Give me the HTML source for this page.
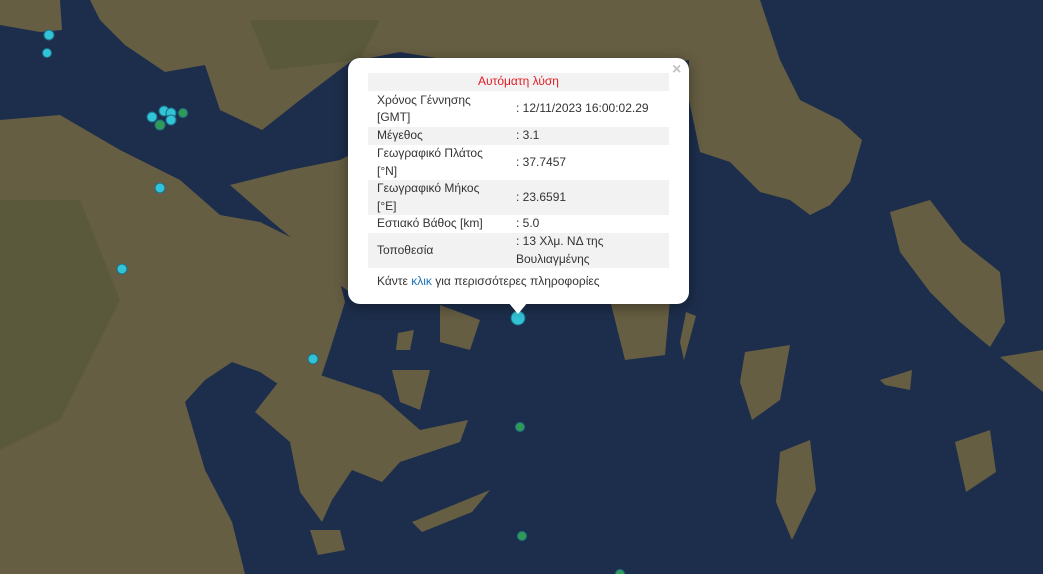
<!DOCTYPE html>
<html><head><meta charset="utf-8">
<style>
html,body{margin:0;padding:0;width:1043px;height:574px;overflow:hidden;background:#1d2e4c;font-family:"Liberation Sans",Arial,sans-serif}
svg{position:absolute;left:0;top:0}
.pop{position:absolute;left:348px;top:58px;width:341px;height:246px;background:#fff;border-radius:12px;box-shadow:0 3px 14px rgba(0,0,0,.4)}
.tip{position:absolute;left:508px;top:302px;width:0;height:0;border-left:10px solid transparent;border-right:10px solid transparent;border-top:12px solid #fff}
.x{position:absolute;left:672px;top:61px;color:#c3c3c3;font-size:16px;font-weight:bold}
table{position:absolute;left:368px;top:73px;width:301px;border-collapse:collapse;font-size:12px;color:#333}
td{padding:0 0 0 9px;line-height:17.5px;vertical-align:middle}
tr.g{background:#f2f2f2}
td.v{padding-left:4px}
.ft{position:absolute;left:377px;top:274px;font-size:12px;color:#333}
.ft span{color:#1a73b8}
</style></head><body>
<svg width="1043" height="574" viewBox="0 0 1043 574">
<rect width="1043" height="574" fill="#1d2e4c"/>
<g fill="#665e42">
<polygon points="0,0 60,0 62,30 40,32 0,25"/>
<polygon points="90,0 720,0 722,40 690,60 600,72 520,70 460,62 400,52 350,62 300,100 262,130 220,110 205,65 165,72 125,45 100,20"/>
<polygon points="230,185 290,170 340,160 360,150 360,300 340,285 300,245 270,220"/>
<polygon points="0,120 60,115 120,150 180,180 220,215 260,222 300,242 340,282 345,302 330,350 320,380 290,392 260,372 232,362 205,380 185,402 205,470 232,522 245,574 0,574"/>
<polygon points="280,380 320,375 380,395 420,430 468,420 460,442 430,452 400,462 382,482 352,470 332,500 322,522 300,492 290,442 255,412"/>
<polygon points="689,0 760,0 780,60 800,100 840,120 862,140 850,182 830,205 810,215 790,200 760,192 730,162 700,152 689,100"/>
<polygon points="440,305 480,320 470,350 440,342"/>
<polygon points="610,300 670,300 665,355 625,360"/>
<polygon points="890,212 930,200 962,242 1000,272 1005,322 990,347 960,322 930,292 900,252"/>
<polygon points="745,352 790,345 780,400 752,420 740,382"/>
<polygon points="1000,357 1043,350 1043,392"/>
<polygon points="955,442 990,430 996,472 966,492"/>
<polygon points="780,452 810,440 816,490 792,540 776,502"/>
<polygon points="412,522 490,490 472,512 422,532"/>
<polygon points="392,370 430,370 420,410 400,402"/>
<polygon points="686,312 696,316 684,360 680,342"/>
<polygon points="398,333 414,330 410,350 396,350"/>
<polygon points="880,380 912,370 910,390 885,385"/>
<polygon points="310,530 340,530 345,550 318,555"/>
</g>
<g fill="#4d5434" opacity=".5">
<polygon points="0,200 80,200 120,300 60,420 0,450"/>
<polygon points="250,20 380,20 360,60 270,70"/>
</g>
<g stroke="#1b6f88" stroke-width="1">
<circle cx="49" cy="35" r="5" fill="#32c3d6"/>
<circle cx="47" cy="53" r="4.5" fill="#32c3d6"/>
<circle cx="160" cy="188" r="5" fill="#32c3d6"/>
<circle cx="122" cy="269" r="5" fill="#32c3d6"/>
<circle cx="313" cy="359" r="5" fill="#32c3d6"/>
<circle cx="518" cy="318" r="7" fill="#32c3d6"/>
<circle cx="160" cy="125" r="5" fill="#2e9a55"/>
<circle cx="152" cy="117" r="5" fill="#32c3d6"/>
<circle cx="164" cy="111" r="5" fill="#32c3d6"/>
<circle cx="171" cy="113" r="5" fill="#32c3d6"/>
<circle cx="171" cy="120" r="5" fill="#32c3d6"/>
<circle cx="183" cy="113" r="4.5" fill="#2e9a55"/>
<circle cx="520" cy="427" r="4.5" fill="#2e9a55"/>
<circle cx="522" cy="536" r="4.5" fill="#2e9a55"/>
<circle cx="620" cy="574" r="4.5" fill="#2e9a55"/>
</g>
</svg>
<div class="pop"></div>
<div class="tip"></div>
<div class="x">×</div>
<table>
<tr class="g"><td colspan="2" style="text-align:center;color:#e31c23;height:18px;padding:0">Αυτόματη λύση</td></tr>
<tr style="height:36px"><td style="width:135px">Χρόνος Γέννησης<br>[GMT]</td><td class="v">: 12/11/2023 16:00:02.29</td></tr>
<tr class="g" style="height:18px"><td>Μέγεθος</td><td class="v">: 3.1</td></tr>
<tr style="height:35px"><td>Γεωγραφικό Πλάτος<br>[°N]</td><td class="v">: 37.7457</td></tr>
<tr class="g" style="height:35px"><td>Γεωγραφικό Μήκος<br>[°E]</td><td class="v">: 23.6591</td></tr>
<tr style="height:18px"><td>Εστιακό Βάθος [km]</td><td class="v">: 5.0</td></tr>
<tr class="g" style="height:35px"><td>Τοποθεσία</td><td class="v">: 13 Χλμ. ΝΔ της<br>Βουλιαγμένης</td></tr>
</table>
<div class="ft">Κάντε <span>κλικ</span> για περισσότερες πληροφορίες</div>
</body></html>
